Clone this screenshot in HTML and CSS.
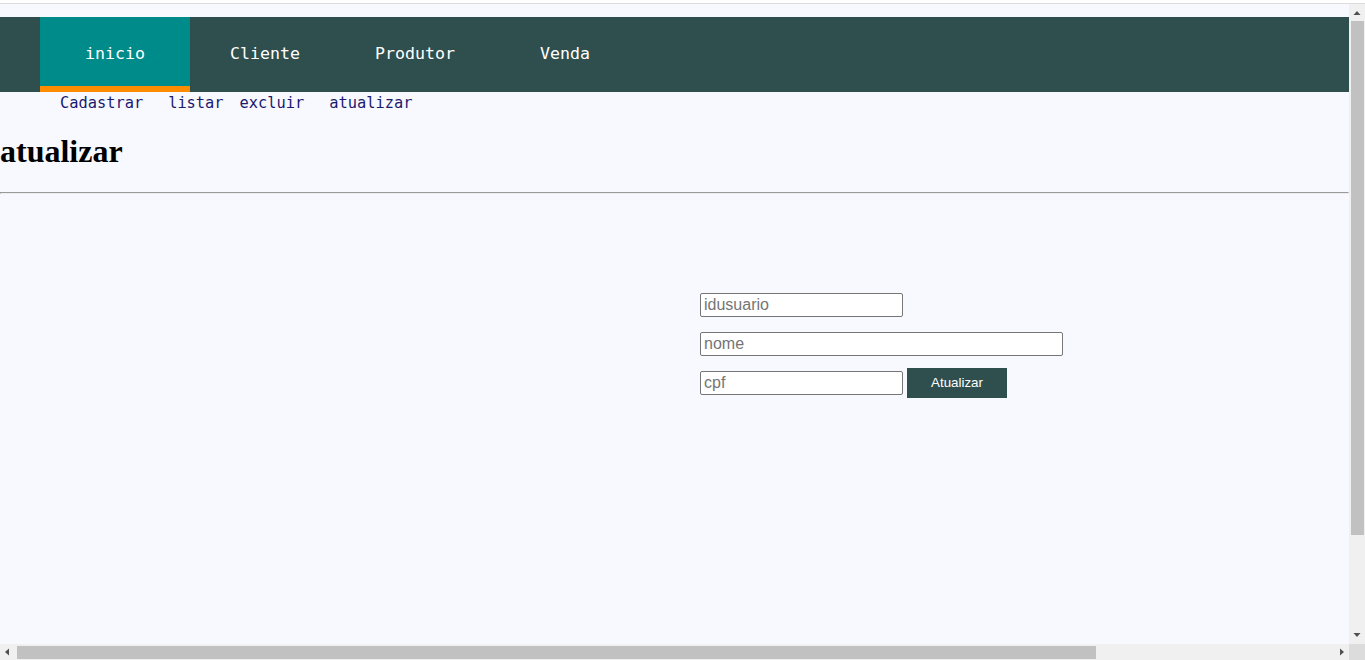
FILE: index.html
```html
<!DOCTYPE html>
<html lang="pt">
<head>
<meta charset="utf-8">
<title>atualizar</title>
<link rel="stylesheet" href="styles.css">
</head>
<body>
<div class="chrome-top"></div>
<div class="window">
  <main class="viewport">
    <div class="page">
      <nav class="main-nav">
        <a class="tab tab-active" href="#">inicio</a>
        <a class="tab" href="#">Cliente</a>
        <a class="tab" href="#">Produtor</a>
        <a class="tab" href="#">Venda</a>
      </nav>
      <div class="sub-nav">
        <a class="sub-link sub-cadastrar" href="#">Cadastrar</a>
        <a class="sub-link sub-listar" href="#">listar</a>
        <a class="sub-link sub-excluir" href="#">excluir</a>
        <a class="sub-link sub-atualizar" href="#">atualizar</a>
      </div>
      <h1 class="page-title">atualizar</h1>
      <hr class="divider">
      <section class="form-area">
        <form class="update-form">
          <div class="form-row">
            <input class="field field-short" type="text" placeholder="idusuario">
          </div>
          <div class="form-row row-gap">
            <input class="field field-long" type="text" placeholder="nome">
          </div>
          <div class="form-row row-last">
            <input class="field field-short" type="text" placeholder="cpf">
            <button class="btn" type="button">Atualizar</button>
          </div>
        </form>
      </section>
    </div>
  </main>
  <div class="vscroll">
    <div class="sb-btn"><svg width="16" height="16" viewBox="0 0 16 16"><polygon points="4.5,11 11.5,11 8,7" fill="#505050"/></svg></div>
    <div class="vtrack"><div class="vthumb"></div></div>
    <div class="sb-btn"><svg width="16" height="16" viewBox="0 0 16 16"><polygon points="4.5,5 11.5,5 8,9" fill="#505050"/></svg></div>
  </div>
  <div class="hscroll">
    <div class="sb-btn"><svg width="16" height="16" viewBox="0 0 16 16"><polygon points="9,4.5 9,11.5 5,8" fill="#505050"/></svg></div>
    <div class="htrack"><div class="hthumb"></div></div>
    <div class="sb-btn"><svg width="16" height="16" viewBox="0 0 16 16"><polygon points="7,4.5 7,11.5 11,8" fill="#505050"/></svg></div>
  </div>
  <div class="sb-corner"></div>
</div>
</body>
</html>
```

FILE: styles.css
```css
html, body {
  margin: 0;
  padding: 0;
  overflow: hidden;
}
body {
  background: #f8f8ff;
  font-family: "Liberation Serif", "Times New Roman", serif;
}
.chrome-top {
  height: 3px;
  background: #ffffff;
  border-bottom: 1px solid #dcdcdc;
}
.window {
  display: grid;
  grid-template-columns: 1349px 16px;
  grid-template-rows: 640px 16px;
}
.viewport {
  overflow: hidden;
  background: #f8f8ff;
}
.page {
  padding-top: 13px;
}

/* scrollbars */
.vscroll {
  display: flex;
  flex-direction: column;
  background: #f0f0f0;
}
.hscroll {
  display: flex;
  background: #f0f0f0;
}
.sb-btn {
  width: 16px;
  height: 16px;
  flex: none;
}
.sb-btn svg {
  display: block;
}
.vtrack {
  flex: 1;
}
.vthumb {
  height: 514px;
  margin: 1px 1px 0 2px;
  background: #c1c1c1;
}
.htrack {
  flex: 1;
  padding-top: 2px;
}
.hthumb {
  width: 1079px;
  height: 13px;
  margin-left: 1px;
  background: #c1c1c1;
}
.sb-corner {
  background: #dcdcdc;
}

/* page content */
.main-nav {
  display: flex;
  height: 75px;
  padding-left: 40px;
  background: #2f4f4f;
}
.tab {
  box-sizing: border-box;
  width: 150px;
  height: 75px;
  padding-top: 27px;
  line-height: 20px;
  text-align: center;
  color: #ffffff;
  text-decoration: none;
  font-family: "DejaVu Sans Mono", "Liberation Mono", monospace;
  font-size: 16.6px;
}
.tab-active {
  background: #008b8b;
  border-bottom: 6px solid #ff8c00;
}
.sub-nav {
  display: flex;
  box-sizing: border-box;
  height: 20px;
  padding-top: 1px;
  line-height: 20px;
  font-family: "DejaVu Sans Mono", "Liberation Mono", monospace;
  font-size: 15.35px;
}
.sub-link {
  color: #1a1a6e;
  text-decoration: none;
}
.sub-cadastrar { margin-left: 60px; }
.sub-listar { margin-left: 25px; }
.sub-excluir { margin-left: 16px; }
.sub-atualizar { margin-left: 25px; }
.page-title {
  font-size: 32px;
  font-weight: bold;
  margin: 21.44px 0;
}
.divider {
  margin: 8px 0;
}
.form-area {
  padding: 91px 0 0 700px;
}
.update-form {
  display: flex;
  flex-direction: column;
}
.form-row {
  display: flex;
  align-items: center;
  gap: 4px;
}
.row-gap {
  margin-top: 15px;
}
.row-last {
  margin-top: 12px;
}
.field {
  box-sizing: border-box;
  height: 24px;
  padding: 1px 3px;
  border: 1px solid #767676;
  border-radius: 2px;
  background: #ffffff;
  font-family: "Liberation Sans", Arial, sans-serif;
  font-size: 16px;
  color: #000;
}
.field::placeholder {
  color: #757575;
}
.field-short { width: 203px; }
.field-long { width: 363px; }
.btn {
  box-sizing: border-box;
  width: 100px;
  height: 30px;
  border: none;
  background: #2f4f4f;
  color: #ffffff;
  font-family: "Liberation Sans", Arial, sans-serif;
  font-size: 13.33px;
  padding: 0;
}
```
